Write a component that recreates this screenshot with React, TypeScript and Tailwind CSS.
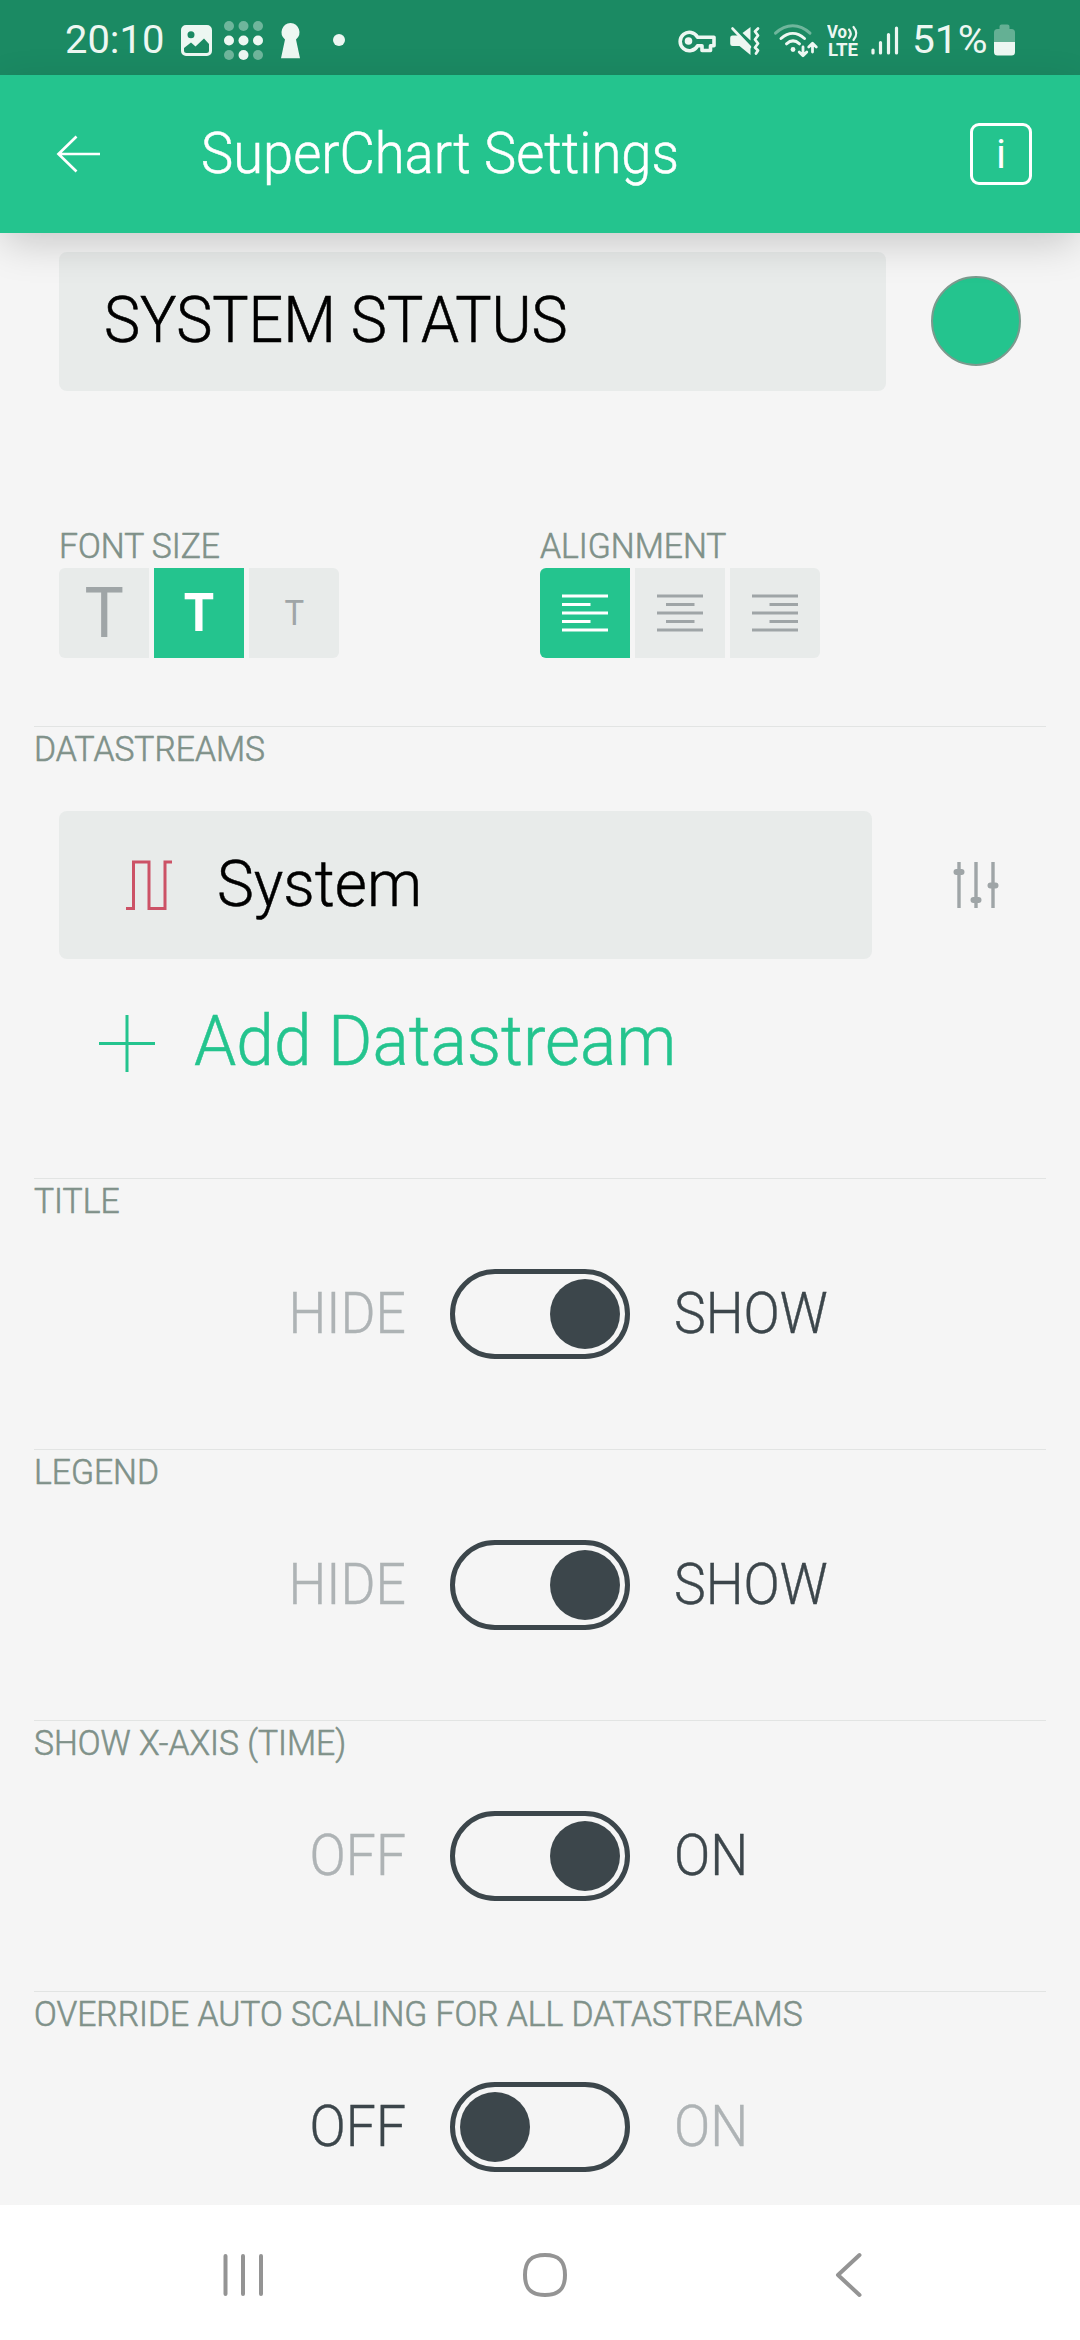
import React from 'react';
import clsx from 'clsx';

const LIGHT = '#edf7f2';

function StatusBar() {
  return (
    <header className="flex h-[75px] shrink-0 items-start bg-[#1b8a63] font-normal text-[#edf7f2]">
      <div className="ml-[65px] mt-[16px] w-[116px] origin-left scale-x-[1.01] whitespace-nowrap text-[39.500px] leading-[48px]">
        20:10
      </div>
      {/* picture, dot grid, keyhole, dot */}
      <svg className="mt-[20px] h-[42px] w-[168px]" viewBox="181 20 168 42" fill={LIGHT}>
        <path
          fillRule="evenodd"
          d="M186 25h21a5 5 0 0 1 5 5v21a5 5 0 0 1-5 5h-21a5 5 0 0 1-5-5V30a5 5 0 0 1 5-5Zm5 6.200a3.500 3.500 0 1 0 0 7 3.500 3.500 0 0 0 0-7ZM184 48v2.500q0 2.500 2.500 2.500h20q2.500 0 2.500-2.500V44l-5-5.500-8.500 8-4.500-4Z"
        />
        {[26, 40.5, 55].map((y, r) =>
          [229, 243.5, 258].map((x, c) => (
            <circle key={`${x}-${y}`} cx={x} cy={y} r="5" opacity={r === 1 || (r === 2 && c === 1) ? 1 : 0.4} />
          )),
        )}
        <path d="M290.500 23a9.300 9.300 0 0 1 5.500 16.500L300 58.200h-19l4-18.700A9.300 9.300 0 0 1 290.500 23Z" />
        <circle cx="339" cy="40" r="6" />
      </svg>
      {/* vpn key, muted speaker, wifi */}
      <svg className="ml-[329px] mt-[20px] h-[42px] w-[142px]" viewBox="678 20 142 42" fill="none" stroke={LIGHT}>
        <path
          strokeWidth="3.600"
          strokeLinejoin="round"
          d="M697.500 37.200A9.200 9.200 0 1 0 697.500 45.800H702V50.500H710.500V45.800H714V37.200Z"
        />
        <circle cx="688.500" cy="41" r="3.800" fill={LIGHT} stroke="none" />
        <path d="M732.500 35.500h5.500L750.500 47V55L739.500 46h-7q-2.300 0-2.300-2.300v-6q0-2.200 2.300-2.200Z" fill={LIGHT} stroke="none" />
        <path d="M750.500 27v13.500L742.500 33Z" fill={LIGHT} stroke="none" />
        <path strokeWidth="2.600" strokeLinecap="round" d="M732.500 28.500L750 47" />
        <path strokeWidth="2.800" strokeLinecap="round" strokeLinejoin="round" d="M758 28.500l-3 3 3 4-3 4 3 4-3 4 3 3-2 3" />
        <g strokeLinecap="round" strokeWidth="3">
          <path opacity="0.4" d="M775.500 33.200c10.500-10 24-10 34.500 0" />
          <path d="M781 38.500c7.500-6.800 16-6.800 23.500 0" />
          <path d="M786.500 43.800c4.500-4 8.500-4 13 0" />
          <path strokeLinejoin="round" strokeWidth="2.800" d="M803 47v8.500M799.200 52l3.800 3.800 3.800-3.800M812.500 52v-8.500M808.700 47l3.800-3.800 3.800 3.800" />
        </g>
        <circle cx="793" cy="49.500" r="2.400" fill={LIGHT} stroke="none" />
      </svg>
      {/* VoLTE and signal strength */}
      <svg className="ml-[7px] mt-[20px] h-[42px] w-[73px]" viewBox="827 20 73 42" fill={LIGHT}>
        <text x="827" y="38" fontSize="17.500" fontWeight="700" textLength="20" lengthAdjust="spacingAndGlyphs">Vo</text>
        <text x="828" y="56" fontSize="17.500" fontWeight="700" textLength="30" lengthAdjust="spacingAndGlyphs">LTE</text>
        <path fill="none" stroke={LIGHT} strokeWidth="2.200" strokeLinecap="round" d="M849 29.500q3.500 4.300 0 8.500M853.500 27q5.500 6.500 0 13" />
        <path stroke={LIGHT} strokeWidth="3.200" strokeLinecap="round" d="M873 50v3M880.500 42.500V53M888.500 34.500V53M896.500 28V53" />
      </svg>
      <div className="ml-[12px] mt-[16px] w-[82px] origin-left scale-x-[1.030] whitespace-nowrap text-[39.500px] leading-[48px]">51%</div>
      <svg className="mt-[20px] h-[42px] w-[22px]" viewBox="994 20 22 42" fill={LIGHT}>
        <path opacity="0.35" d="M999.500 29v-2.500q0-2 2-2h6q2 0 2 2V29h2q3.500 0 3.500 3.500V42h-21v-9.500q0-3.500 3.500-3.500Z" />
        <path d="M994 42h21v10q0 3.500-3.500 3.500h-14q-3.500 0-3.500-3.500Z" />
      </svg>
    </header>
  );
}

function AppBar() {
  return (
    <div className="z-10 flex h-[158px] shrink-0 items-center bg-[#24c48e] text-white shadow-[0_12px_40px_-4px_rgba(0,0,0,0.2)]">
      <svg className="ml-[56px] h-[38px] w-[46px]" viewBox="0 0 46 38" fill="none" stroke="currentColor" strokeWidth="2.700">
        <path d="M44 19H2.500M20.500 1.500L2.500 19l18 17.500" />
      </svg>
      <h1 className="ml-[99px] w-[769px] shrink-0 origin-left scale-x-[0.961] whitespace-nowrap text-[56.500px] leading-[70px] [-webkit-text-stroke:0.5px]">
        SuperChart Settings
      </h1>
      <div className="flex size-[62px] shrink-0 items-center justify-center rounded-[9px] border-[3px] border-white text-[41px] font-normal leading-none">
        i
      </div>
    </div>
  );
}

function Label({ children }: { children: React.ReactNode }) {
  return (
    <div className="origin-left scale-x-[0.973] whitespace-nowrap text-[34.600px] leading-[30px] text-[#7f9189] [-webkit-text-stroke:0.6px]">{children}</div>
  );
}

function Segment({ index, active, children }: { index: number; active?: boolean; children: React.ReactNode }) {
  return (
    <div
      className={clsx(
        'flex size-[90px] items-center justify-center',
        index === 0 && 'rounded-l-[6px]',
        index === 2 && 'rounded-r-[6px]',
        active ? 'bg-[#24c48e] text-white' : 'bg-[#e8ebea] text-[#9fa5a7]',
      )}
    >
      {children}
    </div>
  );
}

function AlignIcon({ x }: { x: number }) {
  return (
    <svg className="h-[38px] w-[46px]" viewBox="0 0 46 38" stroke="currentColor" strokeWidth="3">
      <path d={`M0 2H46M${x} 10.500h28.500M0 19H46M${x} 27.500h28.500M0 36H46`} />
    </svg>
  );
}

function Section({ label, children, tall }: { label: string; children: React.ReactNode; tall?: boolean }) {
  return (
    <section className={clsx('shrink-0', tall ? 'h-[452px]' : 'h-[271px]')}>
      <div className="ml-[34px] mr-[34px] border-t border-[#e2e4e3] pt-[7px]">
        <Label>{label}</Label>
      </div>
      {children}
    </section>
  );
}

function Toggle({ left, right, on }: { left: string; right: string; on: boolean }) {
  return (
    <div className="mt-[53px] flex h-[90px] items-center text-[57.500px] leading-[70px] [-webkit-text-stroke:0.4px]">
      <div className={clsx('w-[406px] origin-right scale-x-[0.93] text-right', on ? 'text-[#aeb3b5]' : 'text-[#3c464b]')}>
        {left}
      </div>
      <div
        className={clsx(
          'ml-[44px] flex h-[90px] w-[180px] items-center rounded-full border-[5px] border-[#3c464b] px-[5px]',
          on ? 'justify-end' : 'justify-start',
        )}
      >
        <div className="size-[70px] rounded-full bg-[#3c464b]" />
      </div>
      <div className={clsx('ml-[44px] origin-left scale-x-[0.93]', on ? 'text-[#3c464b]' : 'text-[#aeb3b5]')}>{right}</div>
    </div>
  );
}

function NavBar() {
  return (
    <nav className="flex h-[135px] shrink-0 items-start bg-white text-[#949494]">
      <svg className="ml-[222px] mt-[48px] h-[44px] w-[42px]" viewBox="0 0 42 44" fill="none" stroke="currentColor" strokeWidth="4" strokeLinecap="round">
        <path d="M3.500 3v38M21 3v38M39 3v38" />
      </svg>
      <svg className="ml-[259px] mt-[48px] h-[44px] w-[44px]" viewBox="0 0 44 44" fill="none" stroke="currentColor" strokeWidth="4">
        <path d="M22 2C36 2 42 8 42 22S36 42 22 42 2 36 2 22 8 2 22 2Z" />
      </svg>
      <svg className="ml-[268px] mt-[47px] h-[46px] w-[28px]" viewBox="0 0 28 46" fill="none" stroke="currentColor" strokeWidth="4" strokeLinecap="round" strokeLinejoin="round">
        <path d="M24.500 3L3 23l21.500 20" />
      </svg>
    </nav>
  );
}

export default function App() {
  return (
    <div className="flex h-[2340px] w-[1080px] flex-col overflow-hidden bg-[#f5f5f5] font-['Roboto','Liberation_Sans',sans-serif] font-light">
      <StatusBar />
      <AppBar />
      <main className="flex min-h-0 flex-1 flex-col overflow-hidden">
        <div className="ml-[59px] mt-[19px] flex shrink-0 items-center">
          <div className="flex h-[139px] w-[827px] items-center rounded-[8px] bg-[#e8ebea] pb-[3px] pl-[45px]">
            <span className="origin-left scale-x-[0.93] whitespace-nowrap text-[65.500px] leading-[80px] text-black [-webkit-text-stroke:0.6px]">SYSTEM STATUS</span>
          </div>
          <div className="mb-[2px] ml-[45px] size-[90px] rounded-full border-2 border-[#7b9a8d] bg-[#24c48e]" />
        </div>

        <div className="ml-[59px] mt-[140px] flex h-[195px] shrink-0">
          <div className="w-[481px]">
            <Label>FONT SIZE</Label>
            <div className="mt-[7px] flex gap-[5px]">
              <Segment index={0}>
                <span className="scale-x-[0.93] pb-[2px] text-[71px] font-normal leading-none">T</span>
              </Segment>
              <Segment index={1} active>
                <span className="scale-x-[0.9] pb-[1px] text-[54.500px] font-bold leading-none">T</span>
              </Segment>
              <Segment index={2}>
                <span className="scale-x-[0.95] text-[34.600px] font-normal leading-none">T</span>
              </Segment>
            </div>
          </div>
          <div>
            <Label>ALIGNMENT</Label>
            <div className="mt-[7px] flex gap-[5px]">
              <Segment index={0} active>
                <AlignIcon x={0} />
              </Segment>
              <Segment index={1}>
                <AlignIcon x={9} />
              </Segment>
              <Segment index={2}>
                <AlignIcon x={17.5} />
              </Segment>
            </div>
          </div>
        </div>

        <Section label="DATASTREAMS" tall>
          <div className="ml-[59px] mt-[47px] flex items-center">
            <div className="flex h-[148px] w-[813px] items-center rounded-[8px] bg-[#e8ebea] pl-[67px]">
              <svg className="h-[50px] w-[46px]" viewBox="0 0 46 50" fill="none" stroke="#cc5266" strokeWidth="3">
                <path d="M0 48.500H7.500V2H23V48.500H39V2H46" />
              </svg>
              <span className="ml-[45px] origin-left scale-x-[0.948] whitespace-nowrap pb-[3px] text-[65.500px] leading-[80px] text-black [-webkit-text-stroke:0.5px]">System</span>
            </div>
            <svg className="ml-[81px] h-[48px] w-[46px]" viewBox="953 861 46 48" stroke="#9fa5a7" strokeWidth="3.400">
              <path d="M959 862v46M976 862v46M993 862v46" />
              <path strokeWidth="6" strokeLinecap="round" d="M956.500 872h5M973.500 900h5M990.500 885.500h5" />
            </svg>
          </div>
          <div className="mt-[41px] flex h-[84px] items-center pl-[98px] text-[#24c48e]">
            <svg className="mt-[2px] h-[58px] w-[58px]" viewBox="0 0 58 58" stroke="currentColor" strokeWidth="3">
              <path d="M1 29.500H57M29 1V58" />
            </svg>
            <span className="ml-[38px] origin-left scale-x-[0.951] whitespace-nowrap pb-[2px] text-[71.200px] leading-[80px] [-webkit-text-stroke:0.5px]">Add Datastream</span>
          </div>
        </Section>

        <Section label="TITLE">
          <Toggle left="HIDE" right="SHOW" on />
        </Section>
        <Section label="LEGEND">
          <Toggle left="HIDE" right="SHOW" on />
        </Section>
        <Section label="SHOW X-AXIS (TIME)">
          <Toggle left="OFF" right="ON" on />
        </Section>
        <Section label="OVERRIDE AUTO SCALING FOR ALL DATASTREAMS">
          <Toggle left="OFF" right="ON" on={false} />
        </Section>
      </main>
      <NavBar />
    </div>
  );
}
